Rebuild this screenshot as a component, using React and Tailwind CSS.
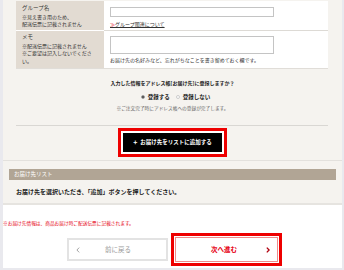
export default function App() {
  return (
    <div className="w-[344px] h-[270px] bg-[#e9e9ee] pl-[3px] overflow-hidden font-['Noto_Sans_CJK_JP',sans-serif] text-[#333]">
      <div className="w-[339px] h-[268px] flex flex-col bg-white">
        {/* form section */}
        <div className="h-[161px] bg-[#f5f3ef] px-[13px] pt-[1px] border-b border-[#e3e1dd] flex flex-col">
          <div className="w-[312px] bg-white grid grid-cols-[88px_1fr] border-b border-[#e0ddd8]">
            <div className="h-[30px] bg-[#e2dbd2] px-[6px] pt-[4px] text-[5px] leading-[7.5px] border-b border-white">
              <div className="text-[5.5px]">グループ名</div>
              <div>※見え書き用のため、</div>
              <div>配送伝票に記載されません</div>
            </div>
            <div className="h-[30px] px-[6px] pt-[6px] border-b border-[#dddad5]">
              <div className="w-[164px] h-[10px] border border-[#c4c4c4] bg-white" />
              <div className="mt-[4px] text-[5px] leading-[6px] underline">
                <span className="text-[#e60012]">≫</span>グループ関連について
              </div>
            </div>
            <div className="h-[37px] bg-[#e2dbd2] px-[6px] pt-[3px] text-[5px] leading-[7.5px]">
              <div className="text-[5.5px]">メモ</div>
              <div>※配送伝票に記載されません</div>
              <div>※ご要望は記入しないでくださ</div>
              <div>い。</div>
            </div>
            <div className="h-[37px] px-[6px] pt-[5px]">
              <div className="w-[164px] h-[18px] border border-[#c4c4c4] bg-white" />
              <div className="mt-[3px] text-[5px] leading-[6px]">
                お届け先の名好みなど、忘れがちなことを書き留めておく欄です。
              </div>
            </div>
          </div>
          <div className="mt-[11px] text-center text-[5px] leading-[6px] font-bold text-[#222]">
            入力した情報をアドレス帳[お届け先]に登録しますか？
          </div>
          <div className="mt-[8px] flex justify-center items-center gap-[6px] text-[5.5px] leading-[6px] font-bold text-[#222] pl-[6px]">
            <div className="flex items-center gap-[3px]">
              <span className="w-[4px] h-[4px] rounded-full border border-[#999] flex items-center justify-center">
                <span className="w-[2px] h-[2px] rounded-full bg-[#333]" />
              </span>
              <span>登録する</span>
            </div>
            <div className="flex items-center gap-[3px]">
              <span className="w-[4px] h-[4px] rounded-full border border-[#ccc] bg-white" />
              <span>登録しない</span>
            </div>
          </div>
          <div className="mt-[5px] text-center text-[4.7px] leading-[6px] text-[#666]">
            ※ご注文完了時にアドレス帳への登録が完了します。
          </div>
          <div className="mt-[14px] w-[312px] border-t border-[#d9d7d3]" />
          <div className="mt-[2px] flex justify-center">
            <div className="w-[109px] h-[29px] border-[3px] border-[#ee0000] bg-white p-[2px]">
              <div className="w-full h-full bg-black text-white text-[5.5px] font-bold flex items-center justify-center gap-[3px]">
                <span className="text-[7px] leading-none">+</span>
                <span>お届け先をリストに追加する</span>
              </div>
            </div>
          </div>
        </div>
        {/* list section */}
        <div className="bg-[#f5f3ef] px-[6px] pt-[8px] border-b-[2px] border-[#e6e4e0]">
          <div className="h-[11px] bg-[#b1a595] text-white text-[5.5px] leading-[11px] pl-[5px]">お届け先リスト</div>
          <div className="h-[23px] flex items-center pl-[7px] text-[6px] font-bold text-[#222]">
            お届け先を選択いただき、「追加」ボタンを押してください。
          </div>
        </div>
        {/* bottom */}
        <div className="flex-1 bg-white">
          <div className="mt-[15px] text-[4.7px] leading-[6px] text-[#e60012]">
            ※お届け先情報は、商品お届け時ご配送伝票に記載されます。
          </div>
          <div className="mt-[7px] flex justify-center items-center gap-[3px] pl-[4px]">
            <div className="w-[101px] h-[23px] border-[2px] border-[#e3e3e3] bg-white flex items-center pl-[7px] pr-[6px] text-[#999]">
              <svg width="4" height="6" viewBox="0 0 4 6" className="shrink-0">
                <path d="M3.2 0.6 L0.9 3 L3.2 5.4" fill="none" stroke="#999" strokeWidth="0.9" />
              </svg>
              <span className="flex-1 text-center text-[6.5px] pr-[4px]">前に戻る</span>
            </div>
            <div className="w-[111px] h-[33px] border-[3px] border-[#ee0000] bg-white p-[1px]">
              <div className="w-full h-full border border-[#f08a8a] flex items-center pl-[6px] pr-[7px]">
                <span className="flex-1 text-center text-[6.5px] font-bold text-[#e60012]">次へ進む</span>
                <svg width="4" height="6" viewBox="0 0 4 6" className="shrink-0">
                  <path d="M0.8 0.6 L3.1 3 L0.8 5.4" fill="none" stroke="#b0000f" strokeWidth="1.3" />
                </svg>
              </div>
            </div>
          </div>
        </div>
      </div>
    </div>
  );
}
